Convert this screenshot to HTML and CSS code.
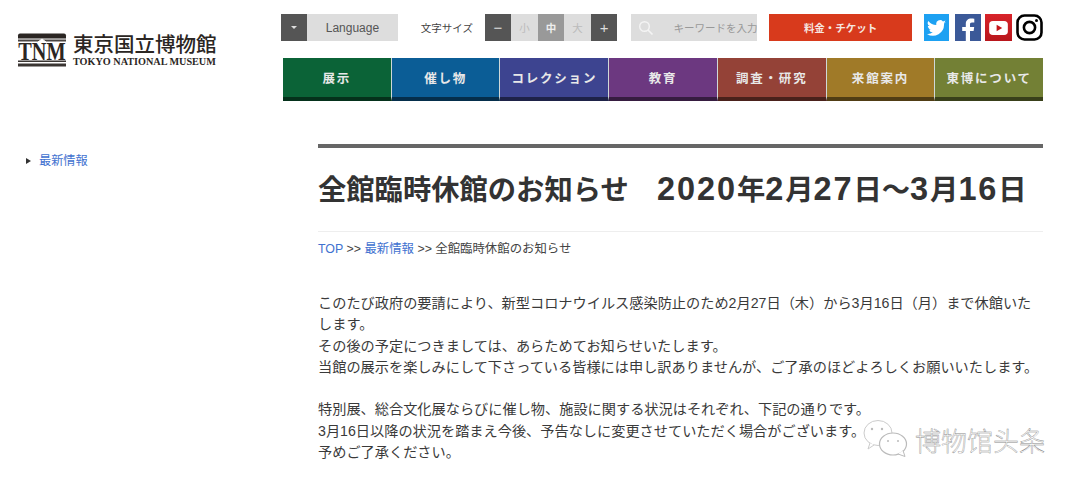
FILE: index.html
```html
<!DOCTYPE html>
<html lang="ja">
<head>
<meta charset="utf-8">
<title>全館臨時休館のお知らせ</title>
<link rel="stylesheet" href="styles.css">
</head>
<body>
<header class="site-header">
  <a class="logo">
    <svg class="logo-mark" width="50" height="34" viewBox="0 0 50 34">
      <path d="M1 2.500Q1 .5 3 .5H47Q49 .5 49 2.500V5.500H1Z" fill="#2b2623"/>
      <path d="M1 6.500H49V8.500H1Z" fill="#4a4542"/>
      <path d="M21 9L25 6l4 3" fill="#fff" stroke="#fff"/>
      <path d="M1 27.500H49V29H1ZM1 30.500H49V33.500H1Z" fill="#3a3532"/>
      <text transform="translate(1.200 26.500) scale(1 1.200)" class="logo-tnm">TNM</text>
    </svg>
    <span class="logo-text">
      <span class="logo-ja">東京国立博物館</span>
      <span class="logo-en">TOKYO NATIONAL MUSEUM</span>
    </span>
  </a>
  <div class="header-right">
    <div class="tools">
      <div class="lang"><span class="lang-arrow"><i></i></span><span class="lang-label">Language</span></div>
      <span class="size-label">文字サイズ</span>
      <div class="sizes">
        <span class="size dark">−</span><span class="size light">小</span><span class="size mid">中</span><span class="size light">大</span><span class="size dark plus">+</span>
      </div>
      <div class="search">
        <svg width="16" height="16" viewBox="0 0 16 16" class="search-icon"><circle cx="6.500" cy="6.500" r="4.800" fill="none" stroke="#f4f4f4" stroke-width="1.400"/><path d="M10 10l4.500 4.500" stroke="#f4f4f4" stroke-width="1.600"/></svg>
        <span class="search-text">キーワードを入力</span>
      </div>
      <a class="ticket">料金・チケット</a>
      <div class="social">
        <span class="sns tw"><svg width="19" height="16" viewBox="0 0 24 20"><path fill="#fff" d="M24 2.400a9.800 9.800 0 0 1-2.800.8A4.900 4.900 0 0 0 23.300.500a9.800 9.800 0 0 1-3.100 1.200 4.900 4.900 0 0 0-8.400 4.500A14 14 0 0 1 1.700 1a4.900 4.900 0 0 0 1.500 6.600 4.900 4.900 0 0 1-2.200-.6c0 2.400 1.700 4.500 4 5a4.900 4.900 0 0 1-2.300.1 4.900 4.900 0 0 0 4.600 3.400A9.900 9.900 0 0 1 0 17.500 14 14 0 0 0 21.500 5v-.6c1-.7 1.800-1.500 2.500-2z"/></svg></span>
        <span class="sns fb"><svg width="14" height="23" viewBox="0 0 14 23"><path fill="#fff" d="M9 23V13h3.600l.6-4H9V6.500C9 5.300 9.400 4.500 11 4.500h2.300V.8C12.800.7 11.600.6 10.300.6 7 .6 4.800 2.600 4.800 6V9H1.200v4h3.600v10z"/></svg></span>
        <span class="sns yt"><svg width="19" height="14" viewBox="0 0 20 15"><rect width="20" height="15" rx="4" fill="#fff"/><path d="M8 4l6 3.500L8 11z" fill="#c4161c"/></svg></span>
        <span class="sns ig"><svg width="27" height="27" viewBox="0 0 27 27"><rect x="1.500" y="1.500" width="24" height="24" rx="7" fill="none" stroke="#000" stroke-width="2.600"/><circle cx="13.500" cy="13.500" r="5.600" fill="none" stroke="#000" stroke-width="2.600"/><circle cx="20.500" cy="6.500" r="1.500" fill="#000"/></svg></span>
      </div>
    </div>
    <nav class="gnav">
      <a class="g1">展示</a><a class="g2">催し物</a><a class="g3">コレクション</a><a class="g4">教育</a><a class="g5">調査・研究</a><a class="g6">来館案内</a><a class="g7">東博について</a>
    </nav>
  </div>
</header>
<div class="page">
  <aside class="side"><a class="side-link">最新情報</a></aside>
  <main class="content">
    <h1 class="title">全館臨時休館のお知らせ　<span class="num">2020</span>年<span class="num">2</span>月<span class="num">27</span>日～<span class="num">3</span>月<span class="num">16</span>日</h1>
    <p class="crumb"><a>TOP</a> &gt;&gt; <a>最新情報</a> &gt;&gt; 全館臨時休館のお知らせ</p>
    <p class="para">このたび政府の要請により、新型コロナウイルス感染防止のため2月27日（木）から3月16日（月）まで休館いたします。<br>その後の予定につきましては、あらためてお知らせいたします。<br>当館の展示を楽しみにして下さっている皆様には申し訳ありませんが、ご了承のほどよろしくお願いいたします。</p>
    <p class="para">特別展、総合文化展ならびに催し物、施設に関する状況はそれぞれ、下記の通りです。<br>3月16日以降の状況を踏まえ今後、予告なしに変更させていただく場合がございます。<br>予めご了承ください。</p>
  </main>
</div>
<div class="watermark">
  <svg width="46" height="38" viewBox="0 0 46 38">
    <ellipse cx="15" cy="14" rx="14" ry="12.500" fill="#fff" stroke="#ccc" stroke-width="1"/>
    <path d="M11 26L5 30l2-6" fill="#fff" stroke="#ccc" stroke-width="1"/>
    <ellipse cx="30" cy="25" rx="13.500" ry="11" fill="#fff" stroke="#bbb" stroke-width="1.200"/>
    <path d="M35 35l7 2.500-2-6" fill="#fff" stroke="#bbb" stroke-width="1"/>
    <circle cx="9" cy="10" r="1.200" fill="#bbb"/><circle cx="19" cy="10" r="1.200" fill="#bbb"/><circle cx="25" cy="22" r="1" fill="#bbb"/><circle cx="35" cy="22" r="1" fill="#bbb"/>
  </svg>
  <span class="wm-text">博物馆头条</span>
</div>
</body>
</html>
```
FILE: styles.css
```css
* { box-sizing: border-box; }
html, body { margin: 0; padding: 0; }
body {
  position: relative;
  height: 487px;
  overflow: hidden;
  background: #fff;
  color: #333;
  font-family: "Liberation Sans", "Noto Sans CJK JP", sans-serif;
}
a { color: inherit; text-decoration: none; }

.site-header {
  display: flex;
  justify-content: space-between;
  padding: 14px 37px 0 17px;
}
.logo { display: flex; gap: 6px; margin-top: 19px; height: 34px; }
.logo-mark { display: block; }
.logo-tnm {
  font: 700 20.300px "Liberation Serif", serif;
  fill: #2b2623;
}
.logo-text { display: flex; flex-direction: column; color: #2b2623; width: 143px; }
.logo-ja {
  font: 500 20.500px/21px "Noto Sans CJK JP", sans-serif;
  white-space: nowrap;
}
.logo-en {
  margin-top: 2px;
  font: 700 10.200px/12px "Liberation Serif", serif;
  white-space: nowrap;
}

.header-right { width: 762px; }
.tools { display: flex; align-items: stretch; height: 27px; }
.lang { display: flex; width: 117px; }
.lang-arrow {
  width: 26px; background: #555;
  display: flex; align-items: center; justify-content: center;
}
.lang-arrow i {
  width: 0; height: 0;
  border-left: 3px solid transparent; border-right: 3px solid transparent;
  border-top: 3px solid #ddd;
}
.lang-label {
  flex: 1; background: #ddd; color: #555;
  font-size: 12px; line-height: 29px; text-align: center;
}
.size-label {
  margin-left: 23px; width: 64px;
  font-size: 10.500px; line-height: 28px; color: #444;
  white-space: nowrap;
}
.sizes { display: flex; width: 133px; }
.size {
  flex: 1; text-align: center;
  font-size: 10.500px; line-height: 28px;
}
.size.dark { background: #555; color: #ddd; font-size: 15px; }
.size.light { background: #ddd; color: #bbb; }
.size.mid { background: #999; color: #eee; font-weight: 700; }
.search {
  margin-left: 14px; width: 126px;
  background: #ddd; display: flex; align-items: center;
  overflow: hidden; white-space: nowrap;
  padding-left: 7px;
}
.search-icon { flex: none; }
.search-text { margin-left: 19px; font-size: 10.500px; color: #999; }
.ticket {
  margin-left: 12px; width: 143px;
  background: #d83a1c; color: #f6e6e0;
  font-size: 10.500px; font-weight: 700; line-height: 28px; text-align: center;
}
.social { margin-left: 11px; display: flex; gap: 4px; }
.sns { width: 26px; height: 27px; display: flex; align-items: center; justify-content: center; }
.tw { background: #1da1f2; margin-right: 2px; width: 25px; margin-left: 1px; }
.fb { background: #3b5998; align-items: flex-end; }
.yt { width: 27px; background: linear-gradient(#d8242a, #b8161c); }
.ig { width: 27px; }

.gnav {
  display: flex;
  margin: 17px 0 0 2px;
  height: 43px;
}
.gnav a {
  flex: 1;
  display: block;
  border-bottom: 4px solid rgba(0,0,0,.5);
  border-right: 1px solid #cfd8d8;
  color: #e8e8e8;
  font-size: 12.500px; font-weight: 700;
  letter-spacing: 1.800px;
  line-height: 43px;
  text-align: center;
  white-space: nowrap;
}
.gnav a:last-child { border-right: 0; }
.g1 { background: #0b6337; }
.g2 { background: #0b5d96; }
.g3 { background: #3d4490; }
.g4 { background: #6c3880; }
.g5 { background: #944237; }
.g6 { background: #a07a28; }
.g7 { background: #738035; }

.page { display: flex; padding: 43px 37px 0 26px; }
.side { width: 292px; padding-top: 8px; }
.side-link {
  display: flex; align-items: center; gap: 8px;
  color: #3f72d0; font-size: 12.200px; line-height: 18px;
}
.side-link::before {
  content: "";
  border-left: 5px solid #333;
  border-top: 3.500px solid transparent;
  border-bottom: 3.500px solid transparent;
}
.content { flex: 1; min-width: 0; border-top: 4px solid #666; }
.title {
  margin: 0;
  padding: 22px 0 22px;
  border-bottom: 1px solid #eee;
  font-size: 28.300px; line-height: 38px; font-weight: 700;
  color: #333;
  white-space: nowrap;
}
.num { font-size: 32.500px; letter-spacing: 1.900px; }
.crumb {
  margin: 9px 0 0;
  font-size: 12.400px; line-height: 16px; color: #444;
}
.crumb a { color: #3f72d0; }
.para {
  margin: 0;
  font-size: 14.200px; line-height: 21.300px; color: #3a3a3a;
}
.crumb + .para { margin-top: 36px; }
.para + .para { margin-top: 21.300px; }

.watermark {
  position: absolute;
  left: 863px; top: 418px;
  display: flex; align-items: center; gap: 6px;
}
.wm-text {
  margin-top: 5px;
  font: 300 26px/34px "Noto Sans CJK SC", sans-serif;
  color: #fff;
  -webkit-text-stroke: .4px #888;
  white-space: nowrap;
}
```
